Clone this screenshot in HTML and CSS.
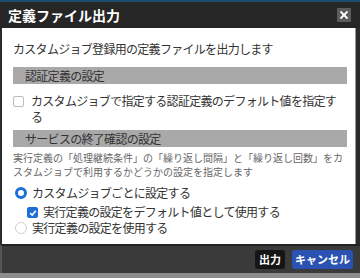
FILE: index.html
```html
<!DOCTYPE html>
<html lang="ja">
<head>
<meta charset="utf-8">
<link rel="stylesheet" href="styles.css">
</head>
<body>
<div class="dialog">
  <div class="header">
    <div class="title">定義ファイル出力</div>
    <div class="close">
      <svg width="10" height="10" viewBox="0 0 10 10"><path d="M1.5 1.5 L8.5 8.5 M8.5 1.5 L1.5 8.5" stroke="#fff" stroke-width="1.8" fill="none"/></svg>
    </div>
  </div>
  <div class="body">
    <p class="intro">カスタムジョブ登録用の定義ファイルを出力します</p>
    <div class="bar">認証定義の設定</div>
    <label class="opt check-row">
      <span class="cb"></span>
      <span class="txt">カスタムジョブで指定する認証定義のデフォルト値を指定する</span>
    </label>
    <div class="bar bar2">サービスの終了確認の設定</div>
    <p class="desc">実行定義の「処理継続条件」の「繰り返し間隔」と「繰り返し回数」をカスタムジョブで利用するかどうかの設定を指定します</p>
    <div class="opt radio-row r1">
      <span class="radio on"></span>
      <span class="txt">カスタムジョブごとに設定する</span>
    </div>
    <div class="opt sub-row">
      <span class="cb on"><svg width="8" height="8" viewBox="0 0 8 8"><path d="M1.2 4.2 L3.2 6 L6.8 1.8" stroke="#fff" stroke-width="1.6" fill="none"/></svg></span>
      <span class="txt">実行定義の設定をデフォルト値として使用する</span>
    </div>
    <div class="opt radio-row">
      <span class="radio"></span>
      <span class="txt">実行定義の設定を使用する</span>
    </div>
  </div>
  <div class="footer">
    <button class="btn btn-dark">出力</button>
    <button class="btn btn-blue">キャンセル</button>
  </div>
</div>
</body>
</html>
```

FILE: styles.css
```css
html, body {
  margin: 0;
  padding: 0;
  background: #8a8a8a;
}
body {
  font-family: "Noto Sans CJK JP", "Noto Sans", sans-serif;
  color: #333;
}
.dialog {
  width: 360px;
  height: 278px;
  box-sizing: border-box;
  display: flex;
  flex-direction: column;
  background: #2b2b2b;
  border-top: 2px solid #1b4c6e;
  border-bottom: 5px solid #8c8c8c;
}
.header {
  height: 26px;
  display: flex;
  align-items: center;
  justify-content: space-between;
  padding: 0 8px 0 8px;
  background: #262626;
}
.title {
  color: #fff;
  font-weight: bold;
  font-size: 14px;
  line-height: 18px;
}
.close {
  width: 14px;
  height: 14px;
  background: #5c5c5c;
  display: flex;
  align-items: center;
  justify-content: center;
  margin-right: 1px;
}
.body {
  flex: 1;
  background: #fff;
  margin: 0 4px 0 2px;
  padding: 13px 8px 0 11px;
  font-size: 12px;
  letter-spacing: -0.7px;
  border-right: 1px solid #999;
}
.intro {
  margin: 0;
  line-height: 16px;
}
.bar {
  margin-top: 10px;
  background: #a9a9a9;
  height: 17px;
  line-height: 17px;
  padding-left: 12px;
  color: #333;
}
.bar2 {
  margin-top: 5px;
}
.opt {
  display: flex;
  align-items: flex-start;
  line-height: 16px;
}
.check-row {
  margin-top: 9px;
}
.check-row .cb {
  margin: 3px 7px 0 0;
}
.cb {
  flex: none;
  width: 9px;
  height: 9px;
  border: 1px solid #bcbcbc;
  border-radius: 2px;
  background: #fff;
  display: flex;
  align-items: center;
  justify-content: center;
}
.cb.on {
  background: #1f6fd6;
  border-color: #1f6fd6;
}
.desc {
  margin: 4px 0 0 0;
  font-size: 10px;
  line-height: 14px;
  color: #666;
  letter-spacing: 0;
}
.radio-row .radio {
  margin: 2px 5px 0 2px;
}
.r1 {
  margin-top: 6px;
}
.radio {
  flex: none;
  width: 10px;
  height: 10px;
  border: 1px solid #cfcfcf;
  border-radius: 50%;
  background: #fff;
}
.radio.on {
  width: 6px;
  height: 6px;
  border: 3px solid #1f6fd6;
}
.sub-row {
  margin-top: 3px;
  padding-left: 14px;
}
.sub-row .cb {
  margin: 3px 5px 0 0;
}
.footer {
  height: 27px;
  display: flex;
  justify-content: flex-end;
  align-items: center;
  gap: 7px;
  padding: 0 7px 0 0;
  background: #3a3a3a;
  border-top: 2px solid #222;
  border-left: 2px solid #555;
}
.btn {
  font-family: inherit;
  font-size: 11px;
  font-weight: bold;
  color: #fff;
  border: none;
  border-radius: 3px;
  height: 19px;
  line-height: 19px;
  padding: 0;
  margin: 0;
}
.btn-dark {
  background: #151515;
  width: 30px;
}
.btn-blue {
  background: #2a52b2;
  width: 61px;
}
```
